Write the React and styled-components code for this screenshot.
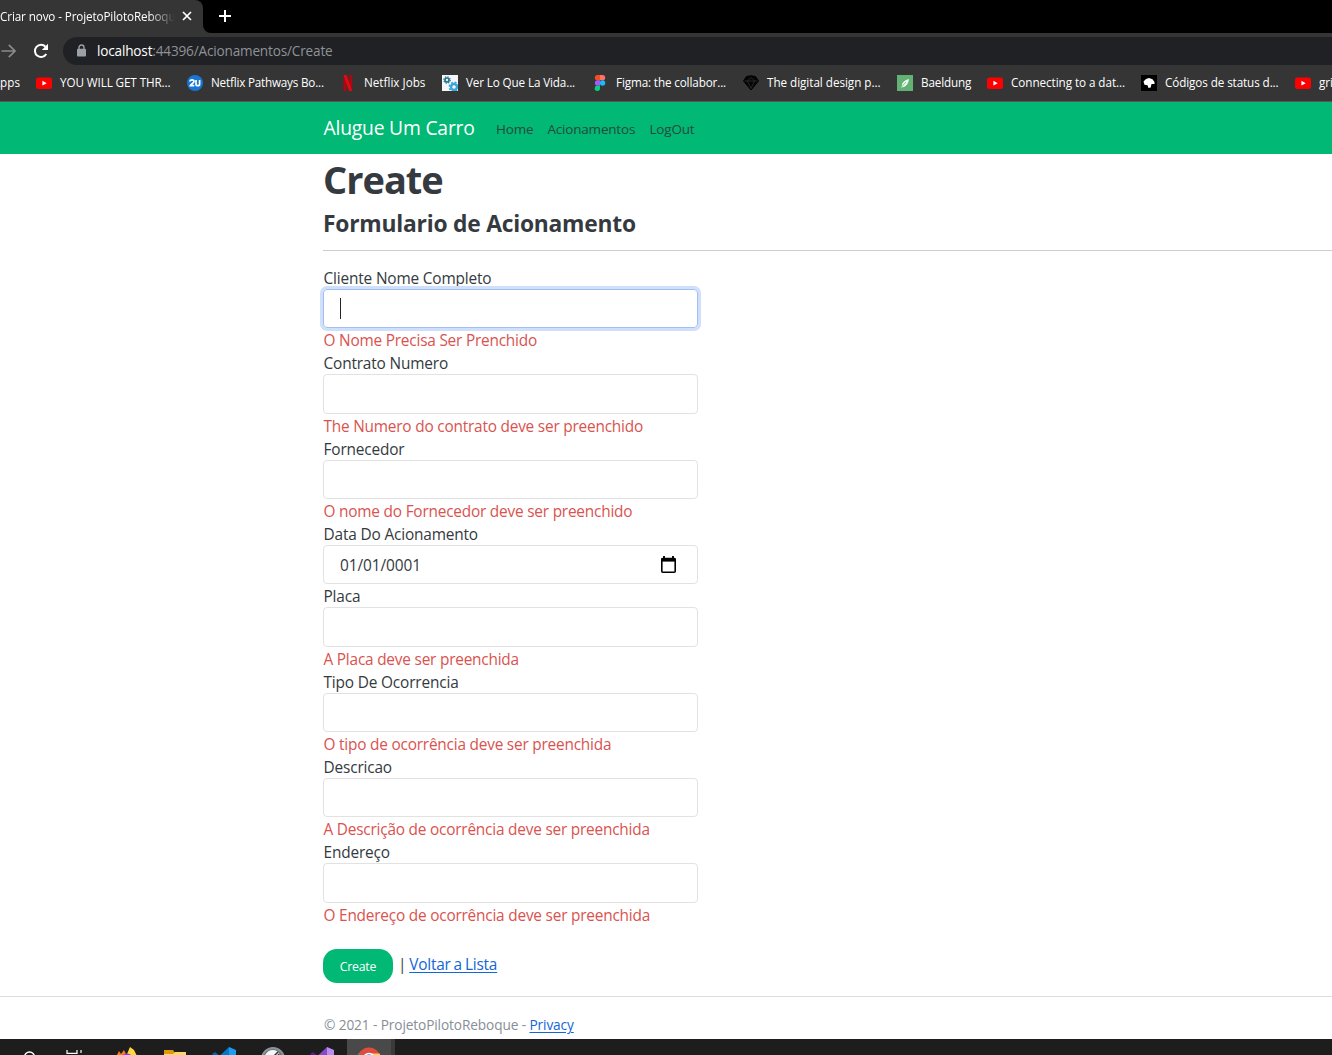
import React from "react";
import styled, { createGlobalStyle, css } from "styled-components";

const Global = createGlobalStyle`
  *, *::before, *::after { box-sizing: border-box; }
  html, body { margin: 0; height: 100%; overflow: hidden; }
  body { background: #fff; color: #343a40; font-family: "Open Sans", "Noto Sans", sans-serif; }
  svg { display: block; flex: none; }
`;

const Screen = styled.div`
  display: flex;
  flex-direction: column;
  width: 1332px;
  height: 1055px;
  overflow: hidden;
`;

/* ---------- browser window ---------- */
const Browser = styled.header`
  flex: none;
  height: 102px;
  background: #353535;
  border-bottom: 1px solid #5b5454;
  color: #fff;
`;
const TabStrip = styled.div`
  display: flex;
  height: 33px;
  background: linear-gradient(#353535, #353535) 0 0 / 212px 100% no-repeat;
`;
const Tab = styled.div`
  display: flex;
  align-items: center;
  width: 203px;
  height: 33px;
  padding-bottom: 1px;
  background: #353535;
  border-top-right-radius: 8px;
  box-shadow: 8px -8px 0 #000;
`;
const TabTitle = styled.span`
  width: 175px;
  margin-right: 7px;
  padding-bottom: 1px;
  overflow: hidden;
  white-space: nowrap;
  font-size: 11.7px;
  letter-spacing: -0.12px;
  mask-image: linear-gradient(90deg, #000 148px, transparent 175px);
`;
const StripRest = styled.div`
  flex: 1;
  display: flex;
  align-items: center;
  padding: 0 0 1px 16px;
  background: #000;
  border-bottom-left-radius: 8px;
`;
const AddressRow = styled.div`
  display: flex;
  align-items: center;
  height: 36px;
`;
const Forward = styled.div`
  width: 33px;
`;
const Reload = styled.div`
  width: 30px;
`;
const Omnibox = styled.div`
  display: flex;
  align-items: center;
  gap: 10px;
  flex: 1;
  height: 28px;
  padding-left: 13px;
  border-radius: 14px 0 0 14px;
  background: #202124;
  color: #8f9296;
  font-size: 13.6px;
  letter-spacing: -0.18px;
`;
const Url = styled.span`
  padding-bottom: 1px;
`;
const Host = styled.span`
  color: #fff;
`;
const Bookmarks = styled.nav`
  display: flex;
  align-items: center;
  height: 28px;
`;
const Bookmark = styled.a`
  display: flex;
  align-items: center;
  flex: none;
  gap: 8px;
  width: ${(p) => p.$w}px;
  white-space: nowrap;
  font-size: 11.7px;
  letter-spacing: ${(p) => p.$ls ?? -0.1}px;
`;
const BookmarkText = styled.span`
  padding-bottom: 2px;
`;
const AppsLink = styled.span`
  display: flex;
  justify-content: flex-end;
  width: 20px;
  margin-right: 16px;
  padding-bottom: 2px;
  font-size: 11.7px;
`;

/* ---------- site ---------- */
const Navbar = styled.nav`
  flex: none;
  display: flex;
  align-items: center;
  height: 52px;
  padding-left: 323.5px;
  background: #02b875;
`;
const Brand = styled.a`
  width: 172.5px;
  padding-bottom: 2px;
  color: #fff;
  font-size: 19.3px;
  letter-spacing: -0.2px;
`;
const NavLink = styled.a`
  width: ${(p) => p.$w}px;
  padding-top: 1px;
  color: #23493f;
  font-size: 13.5px;
  letter-spacing: -0.2px;
`;
const Main = styled.main`
  flex: none;
  height: 842px;
  padding-left: 323px;
`;
const Title = styled.h1`
  height: 53px;
  margin: 0;
  font-size: 38px;
  font-weight: 700;
  line-height: 50px;
  letter-spacing: -1px;
`;
const Subtitle = styled.h4`
  height: 43px;
  margin: 0;
  font-size: 22.8px;
  font-weight: 700;
  line-height: 34px;
  letter-spacing: -0.22px;
`;
const Rule = styled.hr`
  height: 1px;
  margin: 0 0 15px;
  border: 0;
  background: #cdcecf;
`;
const Form = styled.form`
  display: flex;
  flex-direction: column;
  width: 375px;
  font-size: 15.4px;
  letter-spacing: -0.21px;
`;
const Field = styled.div`
  display: flex;
  flex-direction: column;
`;
const Label = styled.label`
  height: 23px;
  padding-left: 0.5px;
  line-height: 25px;
  letter-spacing: -0.16px;
`;
const Box = styled.div`
  display: flex;
  align-items: center;
  justify-content: space-between;
  height: 39.33px;
  padding: 0 20px 0 16px;
  border: 1px solid #e2e2e2;
  border-radius: 4px;
  letter-spacing: -0.07px;
  ${(p) =>
    p.$focused &&
    css`
      border-color: #a0bff5;
      box-shadow: 0 0 0 3px #d0e0fb;
    `}
`;
const Value = styled.span`
  padding-top: 2px;
`;
const Caret = styled.i`
  width: 1px;
  height: 21px;
  background: #22262a;
`;
const ErrorText = styled.span`
  height: 23px;
  padding-left: 0.5px;
  line-height: 26px;
  white-space: nowrap;
  color: #d9534f;
`;
const Actions = styled.div`
  display: flex;
  align-items: center;
  height: 34px;
  margin-top: 23px;
  white-space: pre;
`;
const Submit = styled.button`
  width: 70px;
  height: 34px;
  margin-right: 2px;
  padding: 1px 0 0;
  border: 0;
  border-radius: 14px;
  background: #02b875;
  color: #fff;
  font: 12.3px "Open Sans", sans-serif;
  letter-spacing: -0.25px;
`;
const Link = styled.a`
  color: #1266d6;
  text-decoration: underline;
  text-underline-offset: 1.5px;
`;
const BackRow = styled.span`
  padding-bottom: 3px;
  word-spacing: -0.8px;
`;
const Footer = styled.footer`
  flex: none;
  height: 43px;
  padding-left: 324px;
  border-top: 1px solid #dcddde;
  color: #868e96;
  font-size: 13.7px;
  line-height: 56px;
  letter-spacing: -0.12px;
`;

/* ---------- taskbar ---------- */
const Taskbar = styled.div`
  flex: none;
  display: flex;
  height: 16px;
  padding-left: 4px;
  overflow: hidden;
  background: #1d1d1d;
`;
const Slot = styled.div`
  flex: none;
  display: flex;
  justify-content: center;
  width: 49px;
  padding-top: ${(p) => p.$top ?? 8}px;
  padding-right: ${(p) => p.$shift ?? 0}px;
  ${(p) =>
    p.$active &&
    css`
      width: 48px;
      background: #494949;
      border-right: 4px solid #3a3a3a;
    `}
`;

const YouTube = () => (
  <svg width="16" height="16" viewBox="0 0 16 16">
    <rect y="2.500" width="16" height="11.500" rx="2.500" fill="#f00" />
    <path d="M6.400 5.800v4.700L10.700 8.200z" fill="#fff" />
  </svg>
);
const Badge2U = () => (
  <svg width="16" height="16" viewBox="0 0 16 16">
    <circle cx="8" cy="8" r="8" fill="#1976d2" />
    <path d="M3 6.600C3 4.400 7 4.400 7 6.600 7 8 3.500 9.300 3.300 10.700H7.300M9 5v4.200c0 2 3.600 2 3.600 0V5" fill="none" stroke="#fff" strokeWidth="1.700" />
  </svg>
);
const Netflix = () => (
  <svg width="16" height="16" viewBox="0 0 16 16">
    <path d="M3.500 0h3v16l-3 .3zM9.200 0h3v16.200l-3-.2z" fill="#b1060f" />
    <path d="M3.500 0h3l5.700 16.200-3-.2z" fill="#e50914" />
  </svg>
);
const Gears = () => (
  <svg width="16" height="16" viewBox="0 0 16 16">
    <path d="M0 0h16v16H0z" fill="#f3f7f9" />
    <circle cx="5" cy="5" r="2" fill="none" stroke="#26748f" strokeWidth="1.700" />
    <circle cx="5" cy="5" r="3.200" fill="none" stroke="#26748f" strokeWidth="1.200" strokeDasharray="1.300 1.210" />
    <circle cx="12" cy="12" r="3" fill="none" stroke="#3ba5d8" strokeWidth="2.400" />
    <circle cx="12" cy="12" r="4.700" fill="none" stroke="#3ba5d8" strokeWidth="1.500" strokeDasharray="2 1.690" />
  </svg>
);
const Figma = () => (
  <svg width="16" height="16" viewBox="0 0 16 16">
    <path d="M8 0H5.500a2.650 2.650 0 0 0 0 5.300H8z" fill="#f24e1e" />
    <path d="M8 0h2.500a2.650 2.650 0 0 1 0 5.300H8z" fill="#ff7262" />
    <path d="M8 5.300H5.500a2.650 2.650 0 0 0 0 5.300H8z" fill="#a259ff" />
    <circle cx="10.600" cy="8" r="2.650" fill="#1abcfe" />
    <path d="M8 10.600H5.500A2.650 2.650 0 1 0 8 13.300z" fill="#0acf83" />
  </svg>
);
const Sketch = () => (
  <svg width="16" height="16" viewBox="0 0 16 16">
    <path d="M3.500 1.500 8 .8l4.500.7L15.500 6 8 15 .5 6z" fill="#050505" stroke="#000" />
    <path d="M1.500 6h13M4.500 6 8 13.500 11.500 6 8 2.500z" fill="none" stroke="#303030" strokeWidth=".8" />
  </svg>
);
const Leaf = () => (
  <svg width="16" height="16" viewBox="0 0 16 16">
    <path d="M0 0h16v16H0z" fill="#63b175" />
    <path d="M12 4C8 5 4.800 7.500 5 10.500l-1 2C8.200 12.500 11.500 9 12 4z" fill="#f2faf4" />
    <path d="m4.500 12 4.500-5" stroke="#63b175" strokeWidth=".8" />
  </svg>
);
const Mdn = () => (
  <svg width="16" height="16" viewBox="0 0 16 16">
    <path d="M0 0h16v16H0z" fill="#000" />
    <path d="M2.500 6.500 5 4l3-1 3.500 1.200L13.500 7v2h-3l-.8 3.500-2.200.5-1-2.800-3-.5z" fill="#fff" />
  </svg>
);

const bookmarks = [
  { w: 151, icon: <YouTube />, text: "YOU WILL GET THR..." },
  { w: 153, icon: <Badge2U />, text: "Netflix Pathways Bo...", ls: -0.2 },
  { w: 102, icon: <Netflix />, text: "Netflix Jobs", ls: 0 },
  { w: 150, icon: <Gears />, text: "Ver Lo Que La Vida...", ls: -0.13 },
  { w: 151, icon: <Figma />, text: "Figma: the collabor...", ls: -0.13 },
  { w: 154, icon: <Sketch />, text: "The digital design p...", ls: -0.04 },
  { w: 90, icon: <Leaf />, text: "Baeldung", ls: -0.15 },
  { w: 154, icon: <YouTube />, text: "Connecting to a dat...", ls: -0.06 },
  { w: 154, icon: <Mdn />, text: "Códigos de status d..." },
  { w: 60, icon: <YouTube />, text: "grid" },
];

const fields = [
  { label: "Cliente Nome Completo", error: "O Nome Precisa Ser Prenchido", focused: true },
  { label: "Contrato Numero", error: "The Numero do contrato deve ser preenchido" },
  { label: "Fornecedor", error: "O nome do Fornecedor deve ser preenchido" },
  { label: "Data Do Acionamento", value: "01/01/0001" },
  { label: "Placa", error: "A Placa deve ser preenchida" },
  { label: "Tipo De Ocorrencia", error: "O tipo de ocorrência deve ser preenchida" },
  { label: "Descricao", error: "A Descrição de ocorrência deve ser preenchida" },
  { label: "Endereço", error: "O Endereço de ocorrência deve ser preenchida" },
];

const Calendar = () => (
  <svg width="17" height="18" viewBox="0 0 17 18">
    <path d="M3 0h2v3H3zM12 0h2v3h-2z" fill="#101010" />
    <rect x="1.800" y="2.600" width="13.400" height="13.600" rx="1" fill="#fff" stroke="#000" strokeWidth="1.600" />
    <path d="M1.500 2h14v3.600h-14z" fill="#000" />
  </svg>
);

const VsMark = ({ dark, mid, light }) => (
  <svg width="24" height="24" viewBox="0 0 24 24">
    <path d="m0 7 3-2 15 12v6z" fill={dark} />
    <path d="M17 0 0 16l3 3L19 6z" fill={mid} />
    <path d="m17 0 7 3v18l-7 3z" fill={light} />
  </svg>
);

export default function App() {
  return (
    <Screen>
      <Global />
      <Browser>
        <TabStrip>
          <Tab>
            <TabTitle>Criar novo - ProjetoPilotoReboque</TabTitle>
            <svg width="10" height="10" viewBox="0 0 10 10" stroke="#fff" strokeWidth="1.700">
              <path d="m1 1 8 8M9 1 1 9" />
            </svg>
          </Tab>
          <StripRest>
            <svg width="12" height="12" viewBox="0 0 12 12" stroke="#fff" strokeWidth="2">
              <path d="M6 0v12M0 6h12" />
            </svg>
          </StripRest>
        </TabStrip>
        <AddressRow>
          <Forward>
            <svg width="17" height="16" viewBox="0 0 17 16" fill="none" stroke="#8b8b8b" strokeWidth="1.700">
              <path d="M1.500 8h13M8.800 1.800 15 8l-6.200 6.200" />
            </svg>
          </Forward>
          <Reload>
            <svg width="16" height="16" viewBox="0 0 16 16">
              <path d="M13.300 11A6.100 6.100 0 1 1 12.500 3.700" fill="none" stroke="#fff" strokeWidth="2" />
              <path d="M15 .8V7H8.800z" fill="#fff" />
            </svg>
          </Reload>
          <Omnibox>
            <svg width="11" height="14" viewBox="0 0 11 14">
              <path d="M3 6V3.500a2.500 2.500 0 0 1 5 0V6" fill="none" stroke="#9aa0a6" strokeWidth="1.400" />
              <rect x="1" y="4.800" width="9" height="7.700" rx="1" fill="#9aa0a6" />
            </svg>
            <Url><Host>localhost</Host>:44396/Acionamentos/Create</Url>
          </Omnibox>
        </AddressRow>
        <Bookmarks>
          <AppsLink>Apps</AppsLink>
          {bookmarks.map((b, i) => (
            <Bookmark key={i} $w={b.w} $ls={b.ls}>
              {b.icon}
              <BookmarkText>{b.text}</BookmarkText>
            </Bookmark>
          ))}
        </Bookmarks>
      </Browser>

      <Navbar>
        <Brand>Alugue Um Carro</Brand>
        <NavLink $w={51.5}>Home</NavLink>
        <NavLink $w={102}>Acionamentos</NavLink>
        <NavLink $w={60}>LogOut</NavLink>
      </Navbar>

      <Main>
        <Title>Create</Title>
        <Subtitle>Formulario de Acionamento</Subtitle>
        <Rule />
        <Form>
          {fields.map((f) => (
            <Field key={f.label}>
              <Label>{f.label}</Label>
              <Box $focused={f.focused}>
                {f.focused && <Caret />}
                {f.value && <Value>{f.value}</Value>}
                {f.value && <Calendar />}
              </Box>
              {f.error && <ErrorText>{f.error}</ErrorText>}
            </Field>
          ))}
          <Actions>
            <Submit type="button">Create</Submit>
            <BackRow> | <Link>Voltar a Lista</Link></BackRow>
          </Actions>
        </Form>
      </Main>

      <Footer>
        © 2021 - ProjetoPilotoReboque - <Link>Privacy</Link>
      </Footer>

      <Taskbar>
        <Slot $top={12}>
          <svg width="14" height="14" viewBox="0 0 14 14"><circle cx="7.500" cy="6" r="5" fill="none" stroke="#fff" strokeWidth="1.400" /></svg>
        </Slot>
        <Slot $top={11} $shift={6}>
          <svg width="18" height="14" viewBox="0 0 18 14" fill="none" stroke="#fff" strokeWidth="1.200">
            <path d="M1 0v3.400h10V0M15 0v3M15 5v8" />
          </svg>
        </Slot>
        <Slot>
          <svg width="24" height="24" viewBox="0 0 24 24">
            <path d="M1 10 4 4l2 3 3-4 3 6-4 15H2z" fill="#ff7a18" />
            <path d="m12 7 3-7 4 3 4 8-2 10H10z" fill="#ffd83b" />
            <circle cx="12" cy="13" r="6.500" fill="#8a35f0" />
          </svg>
        </Slot>
        <Slot $shift={2}>
          <svg width="22" height="24" viewBox="0 0 22 24">
            <path d="M0 3h9l2 3v4H0z" fill="#dc9a08" />
            <path d="M0 7h9l2-2h11v17H0z" fill="#ffd766" />
          </svg>
        </Slot>
        <Slot $shift={2}><VsMark dark="#0065a9" mid="#007acc" light="#1f9cf0" /></Slot>
        <Slot $shift={2}>
          <svg width="24" height="24" viewBox="0 0 24 24">
            <circle cx="12" cy="12" r="11" fill="#69747a" stroke="#8c9499" strokeWidth="2" />
            <path d="M3 13c0-6 4-10 9-10 3 0 6 2 7 5l-3 9H4z" fill="#f4f6f7" />
            <path d="m13 9 4-4M17 7l3 3" stroke="#333" strokeWidth="1.500" />
          </svg>
        </Slot>
        <Slot $shift={2}><VsMark dark="#52218a" mid="#854cc7" light="#bc8cf2" /></Slot>
        <Slot $active>
          <svg width="24" height="24" viewBox="0 0 24 24">
            <circle cx="12" cy="12" r="11.500" fill="#de4c3e" />
            <path d="M1.600 6A12 12 0 0 0 12 24l5-9-5 2z" fill="#25a35a" />
            <path d="M12 6.500h10.600A12 12 0 0 1 12 24l5-9z" fill="#ffce44" />
            <circle cx="12" cy="12" r="5.500" fill="#4285f4" stroke="#fff" strokeWidth="1.500" />
          </svg>
        </Slot>
      </Taskbar>
    </Screen>
  );
}
